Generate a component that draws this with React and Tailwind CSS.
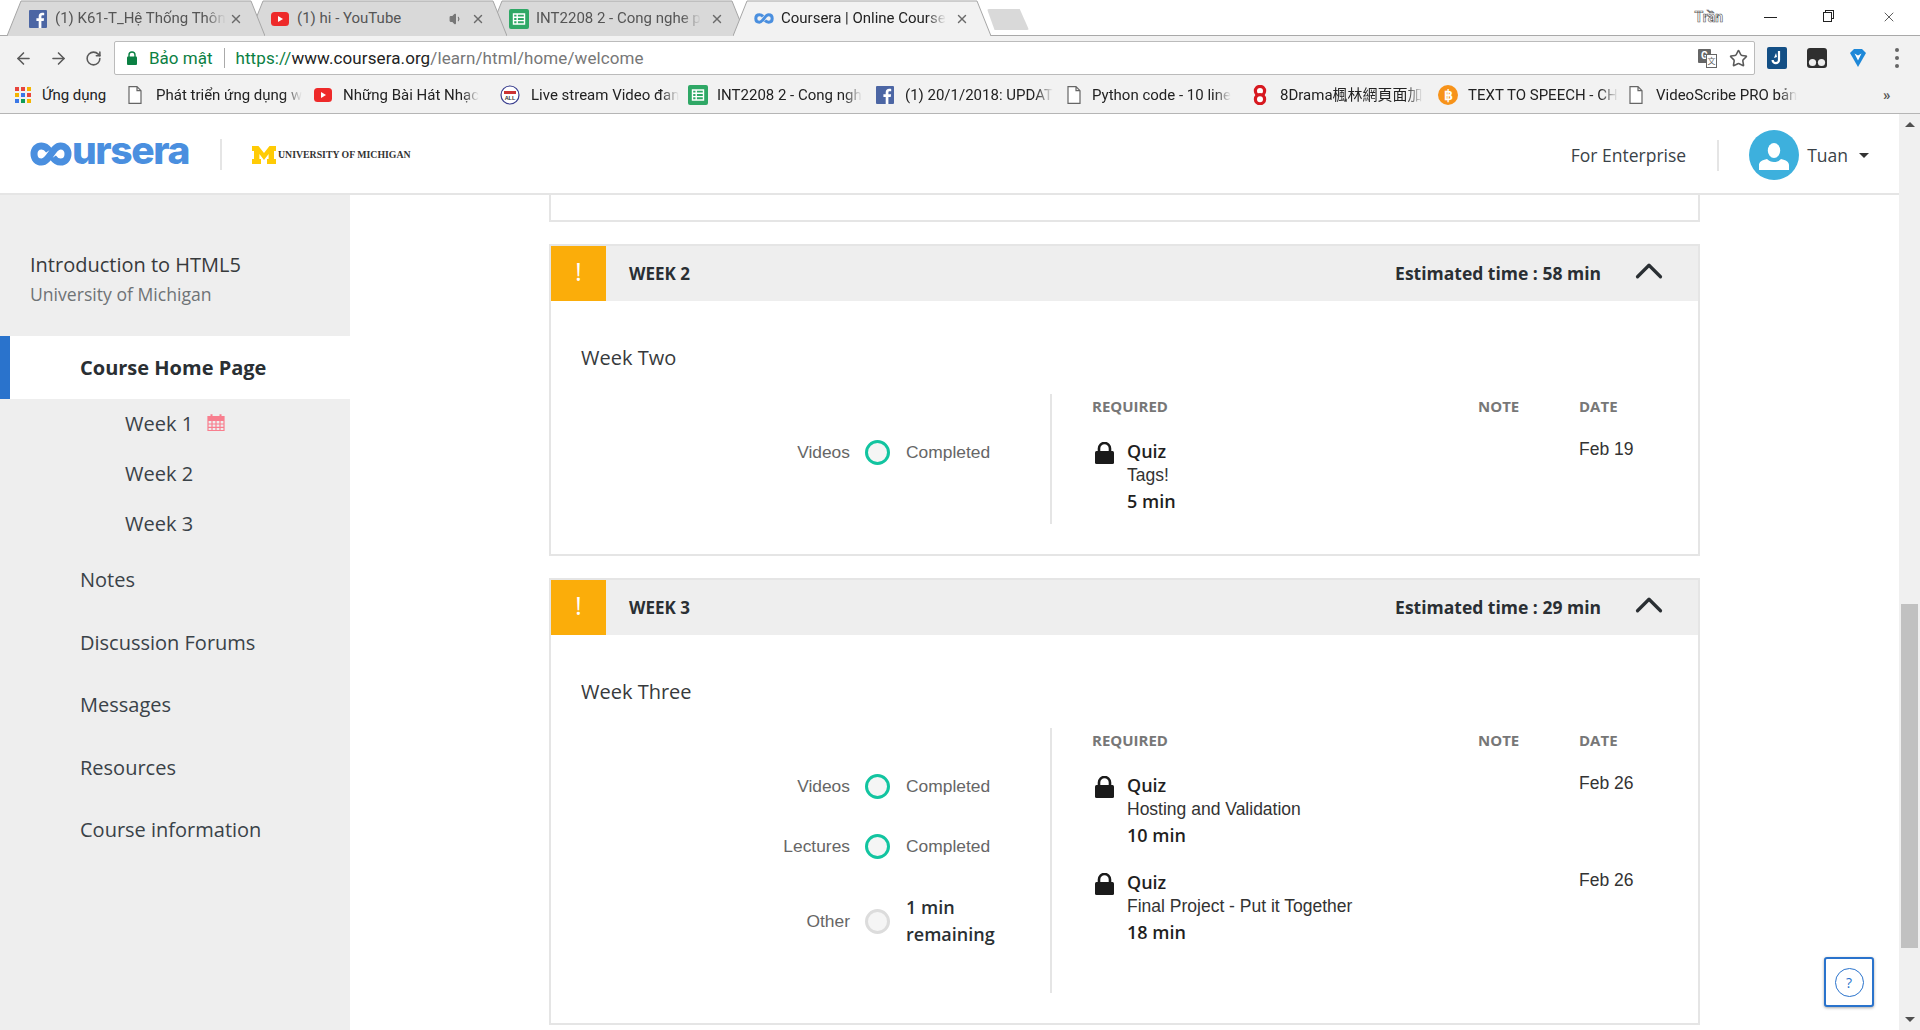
import React from "react";
import { ArrowLeft, ArrowRight, RotateCw, Star, X, Volume1, ChevronUp } from "lucide-react";

const Fb = ({ s = 18 }) => (
  <svg width={s} height={s} viewBox="0 0 18 18" className="shrink-0">
    <rect width="18" height="18" rx="1" fill="#4c66a4" />
    <path d="M12.4 18v-7h2.3l.4-2.7h-2.7V6.6c0-.8.3-1.3 1.4-1.3h1.4V2.9c-.3 0-1.1-.1-2-.1-2.1 0-3.5 1.2-3.5 3.5v2H7.4V11h2.3v7z" fill="#fff" />
  </svg>
);
const Yt = () => (
  <svg width="18" height="14" viewBox="0 0 18 14" className="shrink-0">
    <rect width="18" height="14" rx="3.5" fill="#ee2a2a" />
    <path d="M7 4l5 3-5 3z" fill="#fff" />
  </svg>
);
const Sheet = () => (
  <svg width="20" height="20" viewBox="0 0 20 20" className="shrink-0">
    <rect width="20" height="20" rx="2" fill="#2fa866" />
    <path d="M4.5 5h11v10h-11z M4.5 8.3h11 M4.5 11.6h11 M8.2 5v10" fill="none" stroke="#fff" strokeWidth="1.4" />
  </svg>
);
const Doc = () => (
  <svg width="14" height="18" viewBox="0 0 14 18" className="shrink-0">
    <path d="M1 .7h8l4 4v12.6H1z M9 .7v4h4" fill="#fff" stroke="#666" strokeWidth="1.2" />
  </svg>
);
const Apps = () => (
  <div className="grid grid-cols-3 gap-[2px] w-[16px] shrink-0">
    {["#e8453c", "#e8453c", "#f4b400", "#f4b400", "#3b78e7", "#e8453c", "#3b78e7", "#0f9d58", "#f4b400"].map((c, i) => (
      <div key={i} className="h-[4px] w-[4px]" style={{ background: c }} />
    ))}
  </div>
);
const Live = () => (
  <svg width="20" height="20" viewBox="0 0 20 20" className="shrink-0">
    <circle cx="10" cy="10" r="9" fill="#fff" stroke="#3a3f8f" strokeWidth="1.2" />
    <rect x="4" y="6" width="12" height="3" fill="#c33" />
    <text x="10" y="15" fontSize="5.5" fontWeight="700" fontFamily="Liberation Sans" textAnchor="middle" fill="#333">ALL</text>
  </svg>
);
const Eight = () => (
  <svg width="14" height="20" viewBox="0 0 14 20" className="shrink-0">
    <circle cx="7" cy="6" r="4.6" fill="#fff" stroke="#d71920" strokeWidth="3.2" />
    <circle cx="7" cy="14.2" r="4.6" fill="#fff" stroke="#d71920" strokeWidth="3.2" />
  </svg>
);
const Btc = () => (
  <div className="w-[20px] h-[20px] rounded-full bg-[#f7931a] text-white font-['Liberation_Sans',sans-serif] font-bold text-[14px] leading-[20px] text-center shrink-0">฿</div>
);
const Loop = ({ w = 20, c = "#4a8fdf" }) => (
  <svg width={w} height={w * 0.55} viewBox="0 0 20 11" className="shrink-0">
    <path d="M9 3.4C8 2.3 6.9 1.8 5.4 1.8 3.2 1.8 1.8 3.3 1.8 5.5s1.4 3.7 3.6 3.7c3.6 0 5.5-7.4 9.2-7.4 2.2 0 3.6 1.5 3.6 3.7s-1.4 3.7-3.6 3.7c-1.5 0-2.6-.5-3.6-1.6" fill="none" stroke={c} strokeWidth="3" />
  </svg>
);

const bookmarks = [
  { icon: <Apps />, text: "Ứng dụng", w: 113, gap: 11, plain: true },
  { icon: <Doc />, text: "Phát triển ứng dụng w", w: 186, gap: 14 },
  { icon: <Yt />, text: "Những Bài Hát Nhạc", w: 186, gap: 11 },
  { icon: <Live />, text: "Live stream Video đan", w: 188, gap: 11 },
  { icon: <Sheet />, text: "INT2208 2 - Cong ngh", w: 188, gap: 9 },
  { icon: <Fb />, text: "(1) 20/1/2018: UPDAT", w: 191, gap: 11 },
  { icon: <Doc />, text: "Python code - 10 line", w: 186, gap: 11 },
  { icon: <Eight />, text: "8Drama楓林網頁面加", w: 185, gap: 13 },
  { icon: <Btc />, text: "TEXT TO SPEECH - CH", w: 191, gap: 10 },
  { icon: <Doc />, text: "VideoScribe PRO bản", w: 252, gap: 13 },
];

function TabShape({ active }) {
  return (
    <svg className="absolute inset-0 w-full h-full" viewBox="0 0 258 36" preserveAspectRatio="none">
      <path
        d="M0 36 L14 1 L244 1 L258 36"
        fill={active ? "#f2f2f2" : "#d9d9d9"}
        stroke="#a5a5a5"
        strokeWidth="1"
      />
    </svg>
  );
}

function Tab({ icon, text, active, ml, audio, z, plain }) {
  return (
    <div className="relative h-[36px] w-[258px] shrink-0" style={{ marginLeft: ml, zIndex: active ? 10 : z }}>
      <TabShape active={active} />
      <div className="relative h-full flex items-center pl-[21px] pr-[22px] pt-[1px]">
        <div className="w-[20px] flex justify-center shrink-0">{icon}</div>
        <span
          className={`ml-[7px] whitespace-nowrap text-[15px] ${plain ? "" : "[mask-image:linear-gradient(to_right,black_88%,transparent)]"} ${active ? "text-[#222]" : "text-[#555]"}`}
        >
          {text}
        </span>
        <div className="flex-1" />
        {audio && <Volume1 size={14} className="text-[#777] fill-[#777] mr-[8px]" />}
        <X size={14} strokeWidth={2.4} className="text-[#6a6a6a] shrink-0" />
      </div>
    </div>
  );
}

function TabStrip() {
  return (
    <div className="relative h-[36px] bg-white flex items-start font-['Roboto',sans-serif]">
      <div className="absolute left-0 right-0 bottom-0 h-px bg-[#a9a9a9]" />
      <Tab icon={<Fb />} text="(1) K61-T_Hệ Thống Thôn" ml={7} z={4} />
      <Tab icon={<Yt />} text="(1) hi - YouTube" ml={-16} z={3} audio plain />
      <Tab icon={<Sheet />} text="INT2208 2 - Cong nghe p" ml={-19} z={2} />
      <Tab icon={<Loop />} text="Coursera | Online Course" ml={-13} active />
      <div className="relative ml-[-4px] mt-[9px] w-[42px] h-[21px] bg-[#d9d9d9] rounded-[2px] [clip-path:polygon(0_0,78%_0,100%_100%,18%_100%)]" />
      <div className="flex-1" />
      <span className="mt-[7px] mr-[41px] text-[14px] font-bold text-white [-webkit-text-stroke:0.6px_#555]">Trần</span>
      <div className="mt-[10px] flex items-start text-[#222]">
        <div className="w-[13px] h-[1px] bg-[#222] mt-[7px] mr-[46px]" />
        <div className="relative w-[11px] h-[12px] mr-[47px]">
          <div className="absolute left-[2px] top-0 w-[9px] h-[9px] border border-[#222]" />
          <div className="absolute left-0 top-[2px] w-[9px] h-[10px] border border-[#222] bg-white" />
        </div>
        <X size={16} strokeWidth={1.1} className="mr-[23px] -mt-[1px]" />
      </div>
    </div>
  );
}

function Toolbar() {
  return (
    <div className="h-[41px] pt-[3px] bg-[#f2f2f2] flex items-center font-['Roboto',sans-serif]">
      <ArrowLeft size={19} strokeWidth={2} className="ml-[14px] text-[#5a5a5a]" />
      <ArrowRight size={19} strokeWidth={2} className="ml-[16px] text-[#5a5a5a]" />
      <RotateCw size={17} strokeWidth={2.2} className="ml-[17px] text-[#5a5a5a]" />
      <div className="ml-[12px] w-[1641px] h-[34px] bg-white border border-[#bbb] rounded-[2px] flex items-center">
        <svg width="10" height="14" viewBox="0 0 10 14" className="ml-[12px]">
          <path d="M2 6V4a3 3 0 016 0v2" fill="none" stroke="#0b8043" strokeWidth="1.4" />
          <rect y="5.5" width="10" height="8.5" rx="1" fill="#0b8043" />
        </svg>
        <span className="ml-[12px] mt-[2px] text-[17px] text-[#0b8043]">Bảo mật</span>
        <div className="ml-[12px] h-[20px] w-px bg-[#aaa]" />
        <span className="ml-[10px] mt-[2px] text-[17px] whitespace-nowrap tracking-[0.1px]">
          <span className="text-[#0b8043]">https://</span>
          <span className="text-[#222]">www.coursera.org</span>
          <span className="text-[#777]">/learn/html/home/welcome</span>
        </span>
        <div className="flex-1" />
        <div className="relative w-[19px] h-[19px]">
          <div className="absolute left-0 top-0 w-[13px] h-[14px] bg-[#666] text-white text-[10px] font-bold text-center leading-[14px] rounded-[1px]">G</div>
          <div className="absolute right-0 bottom-0 w-[11px] h-[14px] bg-white border border-[#666] text-[#666] text-[8px] text-center leading-[12px] font-['Noto_Sans_CJK_SC',sans-serif]">文</div>
        </div>
        <Star size={19} strokeWidth={2} className="ml-[12px] mr-[6px] text-[#5a5a5a]" />
      </div>
      <div className="ml-[12px] w-[20px] h-[22px] bg-[#134f85] rounded-[2px] flex items-center justify-center">
        <svg width="12" height="16" viewBox="0 0 12 16">
          <path d="M8 1v9a3.2 3.2 0 01-6.4 0" fill="none" stroke="#fff" strokeWidth="2.2" />
          <path d="M5 3L3 8l3-1" fill="#fff" />
        </svg>
      </div>
      <svg width="20" height="20" viewBox="0 0 20 20" className="ml-[20px]">
        <path d="M3 0h14a3 3 0 013 3v14a3 3 0 01-3 3H3a3 3 0 01-3-3V3a3 3 0 013-3z" fill="#2f2f2f" />
        <circle cx="5.5" cy="14.5" r="3.6" fill="#eee" />
        <circle cx="14.5" cy="14.5" r="3.6" fill="#eee" />
      </svg>
      <svg width="18" height="20" viewBox="0 0 18 20" className="ml-[22px]">
        <path d="M1 5l4-4h8l4 4-8 14z" fill="#1e88d8" />
        <path d="M5.5 5.5l3.5 7 3.5-7-3.5 2z" fill="#fff" />
      </svg>
      <div className="ml-[28px] flex flex-col gap-[4px]">
        <div className="w-[4px] h-[4px] rounded-full bg-[#666]" />
        <div className="w-[4px] h-[4px] rounded-full bg-[#666]" />
        <div className="w-[4px] h-[4px] rounded-full bg-[#666]" />
      </div>
    </div>
  );
}

function Bookmarks() {
  return (
    <div className="h-[37px] bg-[#f2f2f2] border-b border-[#b5b5b5] flex items-center pl-[15px] font-['Roboto','Noto_Sans_CJK_TC',sans-serif]">
      {bookmarks.map((b, i) => (
        <div key={i} className="flex items-center shrink-0" style={{ width: b.w }}>
          {b.icon}
          <span
            className={`text-[15px] text-[#222] whitespace-nowrap ${b.plain ? "" : "[mask-image:linear-gradient(to_right,black_88%,transparent)]"}`}
            style={{ marginLeft: b.gap }}
          >
            {b.text}
          </span>
        </div>
      ))}
      <span className="ml-[2px] text-[15px] text-[#555] font-bold">»</span>
    </div>
  );
}

function Header() {
  return (
    <div className="h-[81px] shrink-0 bg-white border-b-2 border-[#e5e5e5] flex items-center pl-[30px] pt-[3px] text-[#2a2f33]">
      <div className="flex items-center text-[#4a8fdf] w-[160px] -mt-[2px]">
        <svg width="42" height="24" viewBox="0 0 42 24" className="shrink-0">
          <path d="M19 8.5C17 5.5 14.5 4 11.5 4 7 4 4 7.3 4 12s3 8 7.5 8c8 0 11-16 19-16C35 4 38 7.3 38 12s-3 8-7.5 8c-3 0-5.5-1.5-7.5-4.5" fill="none" stroke="#4a8fdf" strokeWidth="7" />
        </svg>
        <span className="font-['Inter',sans-serif] font-extrabold text-[39px] leading-none tracking-[-1.4px] -mt-[9px]">ursera</span>
      </div>
      <div className="ml-[30px] w-[2px] h-[31px] bg-[#e5e5e5] -mt-[2px]" />
      <div className="ml-[30px] flex items-center font-['Liberation_Serif',serif] font-bold">
        <svg width="24" height="18" viewBox="0 0 24 18" className="shrink-0">
          <path d="M0 0h6.5L12 7l5.5-7H24v5h-2v8h2v5h-9v-5h1.6V8L12 14 7.4 8v5H9v5H0v-5h2V5H0z" fill="#ffcb05" />
        </svg>
        <span className="ml-[2px] text-[9.8px] text-[#333] whitespace-nowrap">UNIVERSITY OF MICHIGAN</span>
      </div>
      <div className="flex-1" />
      <span className="text-[17.5px] text-[#3a4248]">For Enterprise</span>
      <div className="ml-[31px] w-[2px] h-[31px] bg-[#e5e5e5]" />
      <div className="ml-[30px] w-[50px] h-[50px] rounded-full bg-[#3db0dd] overflow-hidden">
        <svg viewBox="0 0 50 50" width="50" height="50">
          <ellipse cx="25" cy="20.5" rx="6.2" ry="7.6" fill="#fff" />
          <path d="M10 40v-5c0-3 3-5 8-6 2 2 4 3 7 3s5-1 7-3c5 1 8 3 8 6v5z" fill="#fff" />
        </svg>
      </div>
      <span className="ml-[8px] text-[17.5px] text-[#3a4248]">Tuan</span>
      <div className="ml-[11px] mr-[30px] w-0 h-0 border-x-[5px] border-x-transparent border-t-[5px] border-t-[#333]" />
    </div>
  );
}

const CalIcon = () => (
  <svg width="18" height="18" viewBox="0 0 18 18" className="ml-[14px] -mt-[4px]">
    <path d="M1 3.5h16v14H1z M1 7.5h16 M1 11h16 M1 14.3h16 M5 7.5v10 M9 7.5v10 M13 7.5v10" fill="none" stroke="#f87e8e" strokeWidth="1.2" />
    <rect x="1" y="3" width="16" height="4" fill="#f87e8e" />
    <path d="M4.5 4V1.2M13.5 4V1.2" stroke="#f87e8e" strokeWidth="2" />
  </svg>
);

function NavRow({ children }) {
  return <div className="h-[50px] flex items-center pl-[125px] text-[20px] text-[#3a4248]">{children}</div>;
}
function Top({ children, h = 63 }) {
  return <div className="flex items-center pl-[80px] text-[20px] text-[#3a4248]" style={{ height: h }}>{children}</div>;
}

function Sidebar() {
  return (
    <div className="w-[350px] shrink-0 bg-[#eeeeee] h-full">
      <div className="pl-[30px] pt-[55px] h-[141px]">
        <div className="text-[20px] leading-[30px] text-[#373a3c]">Introduction to HTML5</div>
        <div className="text-[17.6px] leading-[28px] text-[#6f7376]">University of Michigan</div>
      </div>
      <div className="h-[63px] bg-white border-l-[10px] border-[#2a73cc] flex items-center pl-[70px] text-[20px] font-bold text-[#2a2f33]">Course Home Page</div>
      <div>
        <NavRow>Week 1<CalIcon /></NavRow>
        <NavRow>Week 2</NavRow>
        <NavRow>Week 3</NavRow>
      </div>
      <div>
        <Top h={62}>Notes</Top>
        <Top>Discussion Forums</Top>
        <Top h={62}>Messages</Top>
        <Top>Resources</Top>
        <Top h={62}>Course information</Top>
      </div>
    </div>
  );
}

const LockIcon = () => (
  <svg width="19" height="22" viewBox="0 0 19 22" className="shrink-0">
    <path d="M4 10V6.5a5.5 5.5 0 0111 0V10" fill="none" stroke="#1a1a1a" strokeWidth="2.6" />
    <rect y="9" width="19" height="13" rx="1.5" fill="#1a1a1a" />
  </svg>
);

function Progress({ label, state, value, two }) {
  return (
    <div className="flex items-center h-[60px]">
      <div className="w-[299px] text-right font-['Liberation_Sans',sans-serif] text-[17.4px] text-[#666]">{label}</div>
      <div
        className={`ml-[15px] w-[25px] h-[25px] rounded-full bg-[#f5f5f5] border-[3px] shrink-0 ${state === "done" ? "border-[#12c4a0]" : "border-[#dcdcdc]"}`}
      />
      {two ? (
        <div className="ml-[16px] text-[18px] leading-[27px] font-semibold text-[#2a2f33]">{value}</div>
      ) : (
        <div className="ml-[16px] font-['Liberation_Sans',sans-serif] text-[17.4px] text-[#666]">{value}</div>
      )}
    </div>
  );
}

function Req({ title, min, date }) {
  return (
    <div className="grid grid-cols-[386px_101px_auto] h-[97px]">
      <div className="flex pl-[3px]">
        <div className="pt-[3px]"><LockIcon /></div>
        <div className="ml-[13px] text-[#1f1f1f]">
          <div className="text-[18px] leading-[24px] font-semibold">Quiz</div>
          <div className="text-[17.5px] leading-[25px] font-['Liberation_Sans',sans-serif] text-[#333]">{title}</div>
          <div className="text-[18px] leading-[27px] font-semibold">{min}</div>
        </div>
      </div>
      <div />
      <div className="text-[17.5px] leading-[22px] -mt-[1px] font-['Liberation_Sans',sans-serif] text-[#333]">{date}</div>
    </div>
  );
}

function Week({ n, time, subtitle, rows, reqs, divider }) {
  return (
    <div className="border-2 border-[#e5e5e5] mb-[22px]">
      <div className="h-[55px] bg-[#eeeeee] flex items-center">
        <div className="w-[55px] h-full bg-[#fbad0a] text-white text-[26px] leading-[50px] text-center">!</div>
        <div className="ml-[23px] text-[17px] font-bold text-[#2a2f33]">WEEK {n}</div>
        <div className="flex-1" />
        <div className="text-[17.5px] font-bold text-[#2a2f33]">Estimated time : {time}</div>
        <ChevronUp size={46} strokeWidth={1.7} className="ml-[25px] mr-[26px] -mt-[6px] text-[#2a2f33]" />
      </div>
      <div className="pt-[42px] pb-[30px]">
        <div className="pl-[30px] text-[20px] leading-[30px] text-[#373a3c]">{subtitle}</div>
        <div className="mt-[21px] flex" style={{ height: divider }}>
          <div className="w-[499px] shrink-0 pt-[28px]">{rows}</div>
          <div className="w-[2px] bg-[#e5e5e5] shrink-0" />
          <div className="pl-[40px] flex-1">
            <div className="grid grid-cols-[386px_101px_auto] h-[45px] pt-[1px] text-[15px] font-bold text-[#777] leading-[22px]">
              <div>REQUIRED</div><div>NOTE</div><div>DATE</div>
            </div>
            {reqs}
          </div>
        </div>
      </div>
    </div>
  );
}

function Scrollbar() {
  return (
    <div className="w-[21px] shrink-0 bg-[#f0f0f0] flex flex-col items-center">
      <div className="mt-[8px] w-0 h-0 border-x-[5px] border-x-transparent border-b-[5px] border-b-[#505050]" />
      <div className="mt-[477px] w-[17px] h-[344px] bg-[#c1c1c1]" />
      <div className="mt-[69px] w-0 h-0 border-x-[5px] border-x-transparent border-t-[5px] border-t-[#505050]" />
    </div>
  );
}

export default function App() {
  return (
    <div className="relative w-[1920px] h-[1030px] overflow-hidden bg-white flex flex-col font-['Open_Sans',sans-serif]">
      <TabStrip />
      <Toolbar />
      <Bookmarks />
      <div className="flex-1 flex min-h-0">
        <div className="flex-1 flex flex-col min-w-0">
          <Header />
          <div className="flex-1 flex min-h-0">
            <Sidebar />
            <div className="flex-1 pl-[199px] overflow-hidden">
              <div className="w-[1151px]">
                <div className="h-[27px] border-2 border-t-0 border-[#e5e5e5] mb-[22px]" />
                <Week
                  n={2}
                  time="58 min"
                  subtitle="Week Two"
                  divider={130}
                  rows={<Progress label="Videos" state="done" value="Completed" />}
                  reqs={<Req title="Tags!" min="5 min" date="Feb 19" />}
                />
                <Week
                  n={3}
                  time="29 min"
                  subtitle="Week Three"
                  divider={265}
                  rows={
                    <>
                      <Progress label="Videos" state="done" value="Completed" />
                      <Progress label="Lectures" state="done" value="Completed" />
                      <div className="h-[15px]" />
                      <Progress
                        label="Other"
                        state="todo"
                        two
                        value={<>1 min<br />remaining</>}
                      />
                    </>
                  }
                  reqs={
                    <>
                      <Req title="Hosting and Validation" min="10 min" date="Feb 26" />
                      <Req title="Final Project - Put it Together" min="18 min" date="Feb 26" />
                    </>
                  }
                />
              </div>
            </div>
          </div>
        </div>
        <Scrollbar />
      </div>
      <div className="absolute left-[1824px] top-[957px] w-[50px] h-[50px] bg-white border-2 border-[#2a73cc] rounded-[3px] shadow-[0_1px_3px_rgba(0,0,0,0.35)] flex items-center justify-center">
        <div className="w-[29px] h-[29px] rounded-full border border-[#2a73cc] text-[#2a73cc] text-[14px] leading-[27px] text-center">?</div>
      </div>
    </div>
  );
}
